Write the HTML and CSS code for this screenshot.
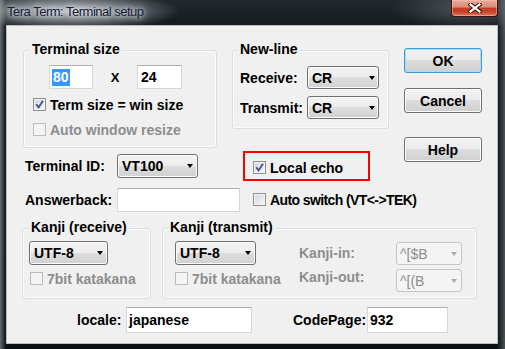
FILE: index.html
```html
<!DOCTYPE html>
<html lang="en">
<head>
    <meta charset="UTF-8">
    <title>Tera Term: Terminal setup</title>
    <link rel="stylesheet" href="styles.css">
</head>
<body>
<div class="window">
    <div class="titlebar">
        <span class="title">Tera Term: Terminal setup</span>
        <span class="close-btn">
            <svg width="14" height="10" viewBox="0 0 14 10">
                <path d="M2.5 1.5 L11.5 8.5 M11.5 1.5 L2.5 8.5" stroke="#3a1610" stroke-width="4.2" stroke-linecap="square"/>
                <path d="M2.5 1.5 L11.5 8.5 M11.5 1.5 L2.5 8.5" stroke="#fff" stroke-width="2.2" stroke-linecap="square"/>
            </svg>
        </span>
    </div>

    <div class="client">
        <div class="upper">
            <div class="left-col">
                <div class="groups-row">
                    <div class="group size-group">
                        <span class="legend">Terminal size</span>
                        <div class="size-row">
                            <div class="edit size-edit"><span class="sel">80</span></div>
                            <span class="times">X</span>
                            <div class="edit size-edit">24</div>
                        </div>
                        <div class="check win-check">
                            <span class="box"><svg width="11" height="11" viewBox="0 0 11 11"><path d="M2.2 5.2 L4.6 8.4 L9 1.8" fill="none" stroke="#3f5289" stroke-width="1.8"/></svg></span>
                            Term size = win size
                        </div>
                        <div class="check disabled resize-check">
                            <span class="box"></span>
                            Auto window resize
                        </div>
                    </div>

                    <div class="group newline-group">
                        <span class="legend">New-line</span>
                        <div class="field-row receive-row">
                            <span class="field-label">Receive:</span>
                            <div class="combo cr-combo"><span>CR</span><i class="arrow"></i></div>
                        </div>
                        <div class="field-row transmit-row">
                            <span class="field-label">Transmit:</span>
                            <div class="combo cr-combo"><span>CR</span><i class="arrow"></i></div>
                        </div>
                    </div>
                </div>

                <div class="id-row">
                    <span class="row-label">Terminal ID:</span>
                    <div class="combo id-combo"><span>VT100</span><i class="arrow"></i></div>
                    <div class="echo-box">
                        <div class="check">
                            <span class="box"><svg width="11" height="11" viewBox="0 0 11 11"><path d="M2.2 5.2 L4.6 8.4 L9 1.8" fill="none" stroke="#3f5289" stroke-width="1.8"/></svg></span>
                            Local echo
                        </div>
                    </div>
                </div>

                <div class="answer-row">
                    <span class="row-label">Answerback:</span>
                    <div class="edit answer-edit"></div>
                    <div class="check switch-check">
                        <span class="box"></span>
                        Auto switch (VT&lt;-&gt;TEK)
                    </div>
                </div>
            </div>

            <div class="buttons">
                <button class="btn default">OK</button>
                <button class="btn cancel">Cancel</button>
                <button class="btn help">Help</button>
            </div>
        </div>

        <div class="kanji-row">
            <div class="group recv-group">
                <span class="legend">Kanji (receive)</span>
                <div class="combo utf-combo recv-combo"><span>UTF-8</span><i class="arrow"></i></div>
                <div class="check disabled recv-check">
                    <span class="box"></span>
                    7bit katakana
                </div>
            </div>

            <div class="group send-group">
                <span class="legend">Kanji (transmit)</span>
                <div class="send-grid">
                    <div class="combo utf-combo"><span>UTF-8</span><i class="arrow"></i></div>
                    <span class="kanji-label in-label">Kanji-in:</span>
                    <div class="combo disabled esc-combo in-combo"><span>^[$B</span><i class="arrow"></i></div>
                    <div class="check disabled send-check">
                        <span class="box"></span>
                        7bit katakana
                    </div>
                    <span class="kanji-label out-label">Kanji-out:</span>
                    <div class="combo disabled esc-combo out-combo"><span>^[(B</span><i class="arrow"></i></div>
                </div>
            </div>
        </div>

        <div class="locale-row">
            <span class="locale-label">locale:</span>
            <div class="edit locale-edit">japanese</div>
            <span class="codepage-label">CodePage:</span>
            <div class="edit codepage-edit">932</div>
        </div>
    </div>
</div>
</body>
</html>
```

FILE: styles.css
```css
/* Reset */
* {
    margin: 0;
    padding: 0;
    box-sizing: border-box;
}

body {
    background-color: #0c1116;
    font: bold 14px 'Liberation Sans', Arial, sans-serif;
    color: #000;
}

/* Window frame */
.window {
    width: 505px;
    height: 349px;
    overflow: hidden;
    background:
        linear-gradient(to right, rgba(140, 145, 150, 0.7), rgba(0, 0, 0, 0) 6px),
        linear-gradient(to left, rgba(120, 125, 130, 0.6), rgba(0, 0, 0, 0) 8px),
        linear-gradient(to bottom, #22282e 0, #0c1217 40px, #0b1015 100%);
}

.titlebar {
    display: flex;
    height: 25px;
    background:
        radial-gradient(ellipse 110px 20px at 70px 11px, rgba(200, 205, 210, 0.95), rgba(200, 205, 210, 0) 100%),
        radial-gradient(ellipse 80px 22px at 470px 8px, rgba(110, 115, 120, 0.6), rgba(0, 0, 0, 0) 100%);
}

.title {
    font-weight: normal;
    font-size: 13px;
    letter-spacing: -0.5px;
    line-height: 15px;
    padding: 4px 0 0 7px;
    color: #142038;
    text-shadow: 0 0 5px #eef1f3, 0 0 9px #dfe3e6;
}

.close-btn {
    margin-left: auto;
    margin-right: 7px;
    width: 47px;
    height: 17px;
    display: flex;
    align-items: center;
    justify-content: center;
    border: 1px solid #3d140a;
    border-top: none;
    border-radius: 0 0 4px 4px;
    background: linear-gradient(#e9ab9b 0, #d98c79 45%, #c33b1e 50%, #c6452a 75%, #e2785c 100%);
    box-shadow: inset 0 0 0 1px rgba(255, 205, 190, 0.45);
}

/* Dialog client area */
.client {
    margin-left: 6px;
    width: 492px;
    height: 319px;
    border: 1px solid #b9bec3;
    background-color: #F0F0F0;
}

.upper {
    display: flex;
    padding: 22px 0 0 16px;
}

.left-col {
    flex: none;
    width: 366px;
}

.groups-row {
    display: flex;
    gap: 15px;
    margin-top: 2px;
}

/* Group boxes */
.group {
    flex: none;
    border: 1px solid #d5dfe5;
    border-radius: 3px;
    box-shadow: inset 0 0 0 1px #fafbfc;
}

.legend {
    display: block;
    width: fit-content;
    margin: -10px 0 0 6px;
    padding: 0 2px;
    line-height: 16px;
    background-color: #F0F0F0;
}

.size-group {
    width: 194px;
    height: 98px;
}

.newline-group {
    width: 157px;
    height: 79px;
}

.newline-group .legend,
.send-group .legend {
    margin-left: 5px;
}

.size-row {
    display: flex;
    align-items: center;
    height: 24px;
    margin: 8px 0 0 25px;
}

.size-edit {
    width: 44px;
}

.size-edit + .times + .size-edit {
    width: 45px;
    padding-left: 3px;
}

.times {
    width: 44px;
    text-align: center;
    font-size: 13px;
}

.sel {
    background-color: #3399ff;
    color: #fff;
    padding: 0 1px;
    line-height: 17px;
}

/* Checkboxes */
.check {
    display: flex;
    align-items: flex-start;
    height: 15px;
    line-height: 15px;
    white-space: nowrap;
}

.box {
    flex: none;
    width: 13px;
    height: 13px;
    margin-right: 4px;
    border: 1px solid #8e8f8f;
    background: linear-gradient(135deg, #cfd4da, #f7f8f9);
    box-shadow: inset 0 0 0 1px #f4f4f4;
}

.box svg {
    display: block;
}

.check.disabled {
    color: #8d8d8d;
}

.check.disabled .box {
    border-color: #bcbcbc;
    background: #f4f4f4;
    box-shadow: none;
}

.win-check {
    margin: 9px 0 0 9px;
}

.resize-check {
    margin: 10px 0 0 9px;
}

/* Edit fields */
.edit {
    display: flex;
    align-items: center;
    height: 24px;
    padding-left: 2px;
    border: 1px solid #d3d8de;
    border-top-color: #abadb3;
    background-color: #fff;
}

/* Combo boxes */
.combo {
    display: flex;
    align-items: center;
    justify-content: space-between;
    height: 24px;
    padding: 0 4px 0 4px;
    border: 1px solid #707070;
    border-radius: 3px;
    background: linear-gradient(#f4f4f4, #ececec 50%, #dedede 50%, #d0d0d0);
    box-shadow: inset 0 0 0 1px #fbfbfb;
}

.arrow {
    width: 0;
    height: 0;
    border-left: 3.5px solid transparent;
    border-right: 3.5px solid transparent;
    border-top: 4px solid #000;
}

.combo.disabled {
    border-color: #c2c6ca;
    background: #f4f4f4;
    box-shadow: none;
    color: #8d8d8d;
    font-weight: normal;
}

.combo.disabled .arrow {
    border-top-color: #a9a9a9;
}

/* New-line rows */
.field-row {
    display: flex;
    align-items: center;
    margin-left: 7px;
}

.field-label {
    width: 67px;
}

.receive-row {
    margin-top: 9px;
}

.transmit-row {
    margin-top: 7px;
}

.cr-combo {
    width: 72px;
    height: 23px;
    padding-right: 3px;
}

/* Terminal ID / Answerback */
.id-row {
    display: flex;
    align-items: center;
    height: 30px;
    margin-top: 3px;
}

.row-label {
    flex: none;
    width: 92px;
    margin-left: 2px;
}

.id-combo {
    width: 81px;
}

.echo-box {
    flex: none;
    width: 127px;
    height: 30px;
    margin-left: 45px;
    padding: 8px 0 0 8px;
    border: 2px solid #f00;
}

.answer-row {
    display: flex;
    align-items: center;
    height: 24px;
    margin-top: 7px;
}

.answer-edit {
    flex: none;
    width: 123px;
}

.switch-check {
    align-self: flex-start;
    margin: 5px 0 0 13px;
    letter-spacing: -0.6px;
}

/* Buttons */
.buttons {
    display: flex;
    flex-direction: column;
    margin-left: 15px;
}

.btn {
    width: 78px;
    height: 25px;
    font: inherit;
    color: #000;
    border: 1px solid #707070;
    border-radius: 3px;
    background: linear-gradient(#f2f2f2, #ebebeb 50%, #dddddd 50%, #cfcfcf);
    box-shadow: inset 0 0 0 1px #fcfcfc;
}

.btn.default {
    border-color: #3c9ad6;
    box-shadow: inset 0 0 0 1px #a6def7;
}

.cancel {
    margin-top: 15px;
}

.help {
    margin-top: 24px;
}

/* Kanji groups */
.kanji-row {
    display: flex;
    gap: 11px;
    margin: 16px 0 0 15px;
}

.recv-group {
    width: 129px;
    height: 71px;
}

.send-group {
    width: 315px;
    height: 71px;
}

.utf-combo {
    width: 81px;
}

.recv-combo {
    width: 79px;
    margin: 6px 0 0 6px;
}

.recv-check {
    margin: 7px 0 0 7px;
}

.send-grid {
    display: grid;
    grid-template-columns: 124px 97px 66px;
    grid-template-rows: 24px 24px;
    row-gap: 4px;
    margin: 6px 0 0 12px;
}

.kanji-label {
    color: #8d8d8d;
    line-height: 17px;
}

.in-label {
    align-self: center;
}

.out-label {
    align-self: start;
}

.esc-combo {
    height: 23px;
    padding-left: 3px;
}

.in-combo {
    align-self: end;
}

.out-combo {
    align-self: start;
}

.send-check {
    margin-top: 3px;
}

/* locale / CodePage */
.locale-row {
    display: flex;
    align-items: center;
    height: 26px;
    margin-top: 8px;
}

.locale-label {
    width: 49px;
    margin-left: 70px;
}

.locale-edit {
    width: 126px;
    height: 26px;
}

.codepage-label {
    width: 74px;
    margin-left: 41px;
}

.codepage-edit {
    width: 81px;
    height: 26px;
}
```
